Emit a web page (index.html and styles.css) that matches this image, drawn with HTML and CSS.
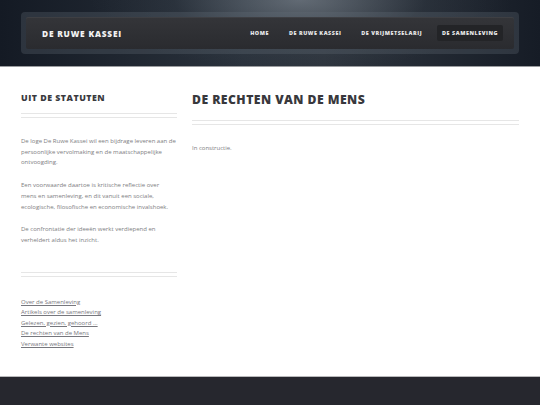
FILE: index.html
```html
<!DOCTYPE html>
<html lang="nl">
<head>
<meta charset="utf-8">
<title>De Ruwe Kassei</title>
<link rel="stylesheet" href="styles.css">
</head>
<body>
<header class="site-header">
  <div class="nav-frame">
    <div class="nav-bar">
      <div class="brand">DE RUWE KASSEI</div>
      <nav class="menu">
        <a href="#" class="menu-item">HOME</a>
        <a href="#" class="menu-item">DE RUWE KASSEI</a>
        <a href="#" class="menu-item">DE VRIJMETSELARIJ</a>
        <a href="#" class="menu-item active">DE SAMENLEVING</a>
      </nav>
    </div>
  </div>
</header>
<div class="content">
  <aside class="sidebar">
    <h2 class="side-title">UIT DE STATUTEN</h2>
    <div class="rule"></div>
    <div class="side-text">
      <p>De loge De Ruwe Kassei wil een bijdrage leveren aan de persoonlijke vervolmaking en de maatschappelijke ontvoogding.</p>
      <p>Een voorwaarde daartoe is kritische reflectie over<br>mens en samenleving, en dit vanuit een sociale, ecologische, filosofische en economische invalshoek.</p>
      <p>De confrontatie der ideeën werkt verdiepend en verheldert aldus het inzicht.</p>
    </div>
    <div class="rule rule-lower"></div>
    <ul class="side-links">
      <li><a href="#">Over de Samenleving</a></li>
      <li><a href="#">Artikels over de samenleving</a></li>
      <li><a href="#">Gelezen, gezien, gehoord ...</a></li>
      <li><a href="#">De rechten van de Mens</a></li>
      <li><a href="#">Verwante websites</a></li>
    </ul>
  </aside>
  <main class="main">
    <h1 class="page-title">DE RECHTEN VAN DE MENS</h1>
    <div class="rule"></div>
    <p class="body-text">In constructie.</p>
  </main>
</div>
<footer class="site-footer"></footer>
</body>
</html>
```
FILE: styles.css
```css
* { box-sizing: border-box; }
html, body { margin: 0; padding: 0; }
body {
  font-family: "Open Sans", "Liberation Sans", sans-serif;
  background: #fff;
  color: #777;
  width: 540px;
  height: 405px;
  overflow: hidden;
  display: flex;
  flex-direction: column;
}
.site-header {
  height: 67px;
  flex: none;
  background:
    radial-gradient(ellipse 210px 70px at 300px 0px, rgba(150,160,170,0.5), rgba(80,90,100,0.15) 60%, rgba(0,0,0,0) 100%),
    linear-gradient(90deg, #141a24 0%, #2a323c 45%, #2e353e 60%, #161c26 100%);
  border-bottom: 1px solid #9a9c9f;
  padding: 12px 21px 0 21px;
}
.nav-frame {
  height: 42px;
  padding: 5px;
  border-radius: 4px;
  background: rgba(100,108,118,0.3);
}
.nav-bar {
  height: 32px;
  background: linear-gradient(180deg, #343539 0%, #2a2b2f 100%);
  border-radius: 2px;
  box-shadow: 0 1px 0 rgba(255,255,255,0.05) inset;
  display: flex;
  align-items: center;
  justify-content: space-between;
  padding: 0 11px 0 16px;
}
.brand {
  color: #f2f2f2;
  font-weight: 800;
  font-size: 8.3px;
  letter-spacing: 0.8px;
}
.menu {
  display: flex;
  align-items: center;
  gap: 2px;
}
.menu-item {
  color: #e8e8e8;
  text-decoration: none;
  font-weight: 800;
  font-size: 5.4px;
  letter-spacing: 0.55px;
  padding: 4px 5px;
  border-radius: 2px;
  margin-left: 8px;
}
.menu-item:first-child { margin-left: 0; }
.menu-item.active {
  background: #232427;
}
.content {
  flex: 1;
  display: flex;
  gap: 15px;
  padding: 0 21px 0 21px;
  background: #fff;
}
.sidebar {
  width: 156px;
  flex: none;
  padding-top: 25px;
}
.main {
  flex: 1;
  padding-top: 25px;
}
.side-title {
  margin: 0;
  font-weight: 800;
  font-size: 8.8px;
  letter-spacing: 0.5px;
  color: #3a3a3e;
  line-height: 13px;
}
.page-title {
  margin: 0;
  font-weight: 800;
  font-size: 12.2px;
  letter-spacing: 0.45px;
  color: #38383c;
  line-height: 16px;
}
.rule {
  height: 5px;
  border-top: 1px solid #e6e6e6;
  border-bottom: 1px solid #e6e6e6;
  margin-top: 8px;
}
.main .rule { margin-top: 12px; }
.side-text {
  padding-top: 18px;
  font-size: 6px;
  line-height: 10.7px;
  color: #7e7e82;
}
.side-text p { margin: 0 0 12px 0; }
.rule-lower { margin-top: 26px; }
.side-links {
  list-style: none;
  margin: 0;
  padding: 20px 0 0 0;
  font-size: 6px;
  line-height: 10.6px;
}
.side-links a { color: #77777d; text-decoration: underline; }
.body-text {
  margin: 18px 0 0 0;
  font-size: 6px;
  line-height: 10px;
  color: #7e7e82;
}
.site-footer {
  height: 29px;
  flex: none;
  background: #26272e;
  border-top: 1px solid #b9b9bb;
}
```
